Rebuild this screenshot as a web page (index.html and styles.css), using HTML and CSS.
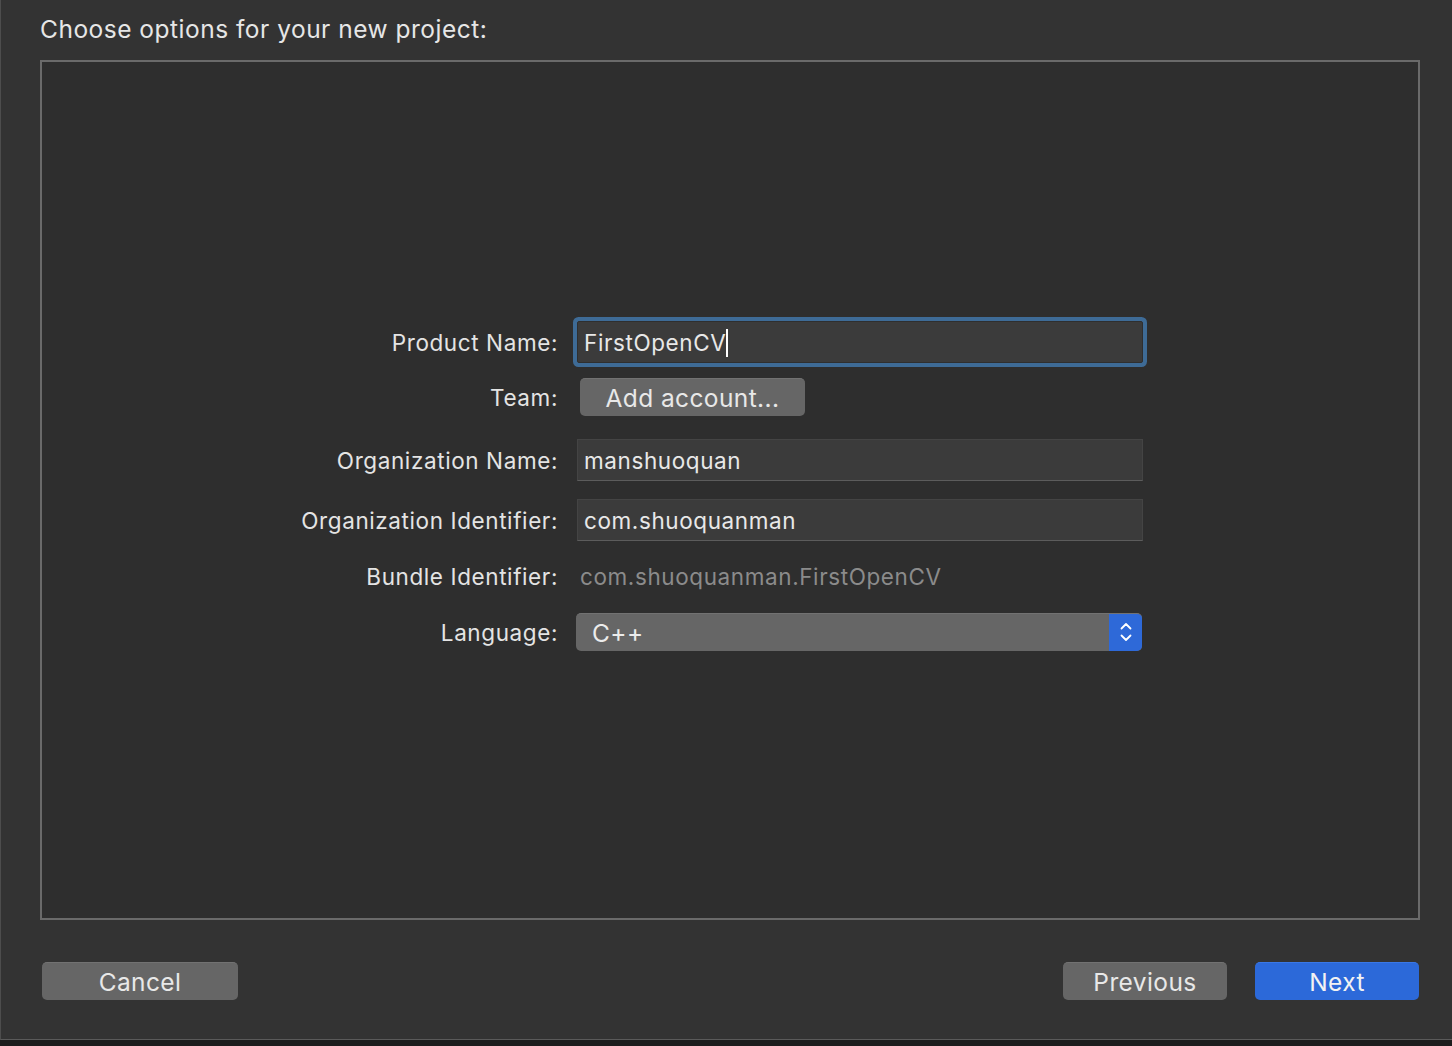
FILE: index.html
```html
<!DOCTYPE html>
<html>
<head>
<meta charset="utf-8">
<link rel="stylesheet" href="styles.css">
</head>
<body>
<div class="window">
  <div class="dialog">
    <h1 class="title">Choose options for your new project:</h1>
    <div class="panel">
      <div class="form">
        <div class="row row-product">
          <div class="label">Product Name:</div>
          <div class="field focused"><span class="value">FirstOpenCV</span><span class="caret"></span></div>
        </div>
        <div class="row row-team">
          <div class="label">Team:</div>
          <div class="control"><button class="btn btn-small">Add account...</button></div>
        </div>
        <div class="row row-orgname">
          <div class="label">Organization Name:</div>
          <div class="field"><span class="value">manshuoquan</span></div>
        </div>
        <div class="row row-orgid">
          <div class="label">Organization Identifier:</div>
          <div class="field"><span class="value">com.shuoquanman</span></div>
        </div>
        <div class="row row-bundle">
          <div class="label">Bundle Identifier:</div>
          <div class="static">com.shuoquanman.FirstOpenCV</div>
        </div>
        <div class="row row-lang">
          <div class="label">Language:</div>
          <div class="popup">
            <span class="popup-value">C++</span>
            <span class="popup-arrows">
              <svg width="14" height="22" viewBox="0 0 14 22"><path d="M2.5 7.5 L7 3 L11.5 7.5" fill="none" stroke="#fff" stroke-width="1.8" stroke-linecap="round" stroke-linejoin="round"/><path d="M2.5 14.5 L7 19 L11.5 14.5" fill="none" stroke="#fff" stroke-width="1.8" stroke-linecap="round" stroke-linejoin="round"/></svg>
            </span>
          </div>
        </div>
      </div>
    </div>
    <div class="footer">
      <button class="btn btn-cancel">Cancel</button>
      <div class="spacer"></div>
      <button class="btn btn-nav">Previous</button>
      <button class="btn btn-nav btn-primary">Next</button>
    </div>
  </div>
  <div class="bottom-strip"></div>
</div>
</body>
</html>
```

FILE: styles.css
```css
html, body {
  margin: 0;
  padding: 0;
  background: #1c1c1c;
}
body {
  font-family: Inter, "Noto Sans", "Liberation Sans", sans-serif;
  color: #e1e1e1;
}
.window {
  width: 1452px;
  height: 1046px;
  display: flex;
  flex-direction: column;
  overflow: hidden;
}
.dialog {
  height: 1040px;
  background: #333333;
  border-left: 1px solid #4d4d4d;
  border-bottom: 1px solid #5a5a5a;
  box-sizing: border-box;
  display: flex;
  flex-direction: column;
  padding-left: 39px;
}
.bottom-strip {
  flex: 1;
  background: #1d1d1d;
}
.title {
  margin: 0;
  height: 60px;
  box-sizing: border-box;
  padding-top: 14px;
  font-size: 24.5px;
  letter-spacing: 0.5px;
  line-height: 30px;
  font-weight: 400;
  color: #e6e6e6;
}
.panel {
  width: 1380px;
  height: 860px;
  box-sizing: border-box;
  border: 2px solid #6a6a6a;
  background: #2e2e2e;
  padding-top: 259px;
}
.form {
  display: flex;
  flex-direction: column;
}
.row {
  display: grid;
  grid-template-columns: 515px 566px;
  column-gap: 20px;
  align-items: center;
}
.label {
  text-align: right;
  font-size: 22.5px;
  letter-spacing: 0.6px;
  color: #e4e4e4;
  padding-top: 1px;
  margin-right: -1px;
}
.row-product { height: 42px; }
.row-team { height: 38px; margin-top: 15px; }
.row-orgname { height: 42px; margin-top: 23px; }
.row-orgid { height: 42px; margin-top: 18px; }
.row-bundle { height: 40px; margin-top: 15px; }
.row-lang { height: 38px; margin-top: 17px; }

.field {
  height: 42px;
  box-sizing: border-box;
  background: #3b3b3b;
  border: 1px solid #444;
  border-bottom-color: #5c5c5c;
  display: flex;
  align-items: center;
  padding-left: 6px;
  padding-top: 1px;
  font-size: 22.5px;
  letter-spacing: 0.6px;
  color: #e8e8e8;
}
.field.focused {
  border-color: #2f2f2f;
  box-shadow: 0 0 0 4px #3e6b96;
  border-radius: 2px;
}
.caret {
  display: inline-block;
  width: 2px;
  height: 28px;
  background: #ffffff;
}
.control {
  display: flex;
  align-items: center;
}
.static {
  font-size: 22.5px;
  letter-spacing: 0.6px;
  color: #8b8b8b;
  padding-left: 3px;
  padding-top: 1px;
}
.btn {
  font-family: Inter, "Noto Sans", "Liberation Sans", sans-serif;
  border: none;
  border-top: 1px solid #727272;
  box-sizing: border-box;
  background: #666666;
  color: #e8e8e8;
  border-radius: 5px;
  height: 38px;
  padding: 0;
  font-size: 24.5px;
  letter-spacing: 0.4px;
  cursor: default;
}
.btn-small {
  margin-left: 3px;
  width: 225px;
}
.popup {
  height: 38px;
  width: 566px;
  box-sizing: border-box;
  background: #666666;
  border-top: 1px solid #727272;
  border-radius: 5px;
  display: flex;
  align-items: center;
  overflow: hidden;
  margin-left: -1px;
}
.popup-value {
  flex: 1;
  padding-left: 16px;
  font-size: 24.5px;
  letter-spacing: 0.4px;
  color: #ececec;
}
.popup-arrows {
  width: 33px;
  height: 38px;
  margin-top: -1px;
  background: #2e69d8;
  display: flex;
  align-items: center;
  justify-content: center;
}
.popup-arrows svg { display: block; }
.footer {
  display: flex;
  align-items: center;
  margin-top: 42px;
  padding-left: 2px;
  padding-right: 33px;
}
.spacer { flex: 1; }
.btn-cancel { width: 196px; }
.btn-nav { width: 164px; }
.btn-nav + .btn-nav { margin-left: 28px; }
.btn-primary {
  background: #2c69d9;
  border-top-color: #3a78e6;
  color: #f2f2f2;
}
```
